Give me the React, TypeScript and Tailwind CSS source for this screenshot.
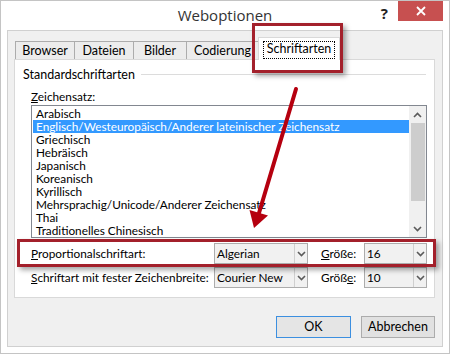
const zeichensaetze = [
  "Arabisch",
  "Englisch/Westeuropäisch/Anderer lateinischer Zeichensatz",
  "Griechisch",
  "Hebräisch",
  "Japanisch",
  "Koreanisch",
  "Kyrillisch",
  "Mehrsprachig/Unicode/Anderer Zeichensatz",
  "Thai",
  "Traditionelles Chinesisch",
];

const tabs = [
  { label: "Browser", w: "w-[60px]" },
  { label: "Dateien", w: "w-[60px]" },
  { label: "Bilder", w: "w-[54px]" },
  { label: "Codierung", w: "w-[73px]" },
];

const Chevron = ({ up }: { up?: boolean }) => (
  <svg width="9" height="6" viewBox="0 0 9 6">
    <path
      d={up ? "M1 5 L4.5 1.5 L8 5" : "M1 1 L4.5 4.5 L8 1"}
      fill="none"
      stroke="#5a5a5a"
      strokeWidth="1.6"
    />
  </svg>
);

const Combo = ({ value, w }: { value: string; w: string }) => (
  <div className={`flex h-[21px] ${w} border border-[#acacac] bg-[#f1f1f1]`}>
    <span className="flex-1 whitespace-nowrap pl-[2px] leading-[19px]">{value}</span>
    <span className="flex w-[13px] items-center justify-center border-l border-[#cfcfcf]">
      <Chevron />
    </span>
  </div>
);

export default function App() {
  return (
    <div className="relative h-[354px] w-[450px] overflow-hidden border border-[#c4c4c4] bg-white font-['Lato',sans-serif] text-[11.8px] text-black">
      {/* title bar */}
      <div className="grid h-[29px] grid-cols-[1fr_auto_1fr]">
        <div />
        <div className="pt-[3px] font-['Open_Sans',sans-serif] text-[15px] leading-[22px] text-[#333]">Weboptionen</div>
        <div className="flex items-start justify-end">
          <span className="mr-[10px] mt-[3px] font-['Open_Sans',sans-serif] text-[15px] font-bold leading-[18px] text-[#222]">?</span>
          <div className="mr-[6px] flex h-[20px] w-[45px] items-center justify-center bg-[#c75050]">
            <svg width="10" height="10" viewBox="0 0 10 10">
              <path d="M1 1 L9 9 M9 1 L1 9" stroke="#fff" strokeWidth="1.8" />
            </svg>
          </div>
        </div>
      </div>

      {/* client area */}
      <div className="mx-[6px] h-[317px] border border-[#d0d0d0] bg-[#f0f0f0] pt-[6px]">
        <div className="flex h-[22px] items-end pl-[7px] text-[12.5px]">
          {tabs.map((t, i) => (
            <div
              key={t.label}
              className={`${t.w} ${i > 0 ? "-ml-px" : ""} h-[18px] border border-b-0 border-[#acacac] bg-[#ececec] text-center leading-[17px]`}
            >
              {t.label}
            </div>
          ))}
          <div className="relative z-10 -mb-px -ml-px flex h-[23px] w-[82px] justify-center border border-b-0 border-[#d9d9d9] bg-white pt-[4px]">
            <span className="h-[16px] px-[3px] leading-[14px] outline-1 outline-dotted outline-black">
              Schriftarten
            </span>
          </div>
        </div>

        <div className="ml-[6px] h-[239px] w-[421px] border border-[#d9d9d9] bg-white">
          <div className="box-content flex h-[15px] items-center pl-[8px] pt-[7px] text-[12.5px]">
            <span className="leading-[15px]">Standardschriftarten</span>
            <span className="ml-[6px] mr-[8px] h-px flex-1 bg-[#dcdcdc]" />
          </div>
          <div className="mt-[7px] pl-[16px] leading-[15px]">
            <u>Z</u>eichensatz:
          </div>

          <div className="ml-[16px] mt-[1px] flex h-[133px] w-[396px] border border-[#828790] bg-white">
            <div className="flex-1 pl-[1px] pt-[1px]">
              {zeichensaetze.map((z, i) => (
                <div
                  key={z}
                  className={`h-[13px] whitespace-nowrap pl-[3px] leading-[13px] ${i === 1 ? "bg-[#3399ff] text-white" : ""}`}
                >
                  {z}
                </div>
              ))}
            </div>
            <div className="flex w-[17px] flex-col items-center bg-[#f0f0f0]">
              <div className="flex h-[17px] items-center">
                <Chevron up />
              </div>
              <div className="h-[78px] w-[14px] bg-[#cdcdcd]" />
              <div className="flex-1" />
              <div className="flex h-[17px] items-center">
                <Chevron />
              </div>
            </div>
          </div>

          <div className="ml-[16px] mt-[5px] flex flex-col gap-[3px]">
            <div className="flex items-center">
              <span className="w-[183px] whitespace-nowrap">
                <u>P</u>roportionalschriftart:
              </span>
              <Combo value="Algerian" w="w-[94px]" />
              <span className="ml-[13px] w-[43px]">
                <u>G</u>röße:
              </span>
              <Combo value="16" w="w-[63px]" />
            </div>
            <div className="flex items-center">
              <span className="w-[183px] whitespace-nowrap">
                <u>S</u>chriftart mit fester Zeichenbreite:
              </span>
              <Combo value="Courier New" w="w-[94px]" />
              <span className="ml-[13px] w-[43px]">
                Größ<u>e</u>:
              </span>
              <Combo value="10" w="w-[63px]" />
            </div>
          </div>
        </div>

        <div className="mr-[7px] mt-[18px] flex justify-end gap-[10px] text-[12.5px]">
          <button className="h-[22px] w-[75px] border border-[#3c8fe0] bg-[#e5e5e5] leading-[20px]">OK</button>
          <button className="h-[22px] w-[74px] border border-[#acacac] bg-[#e1e1e1] leading-[20px]">Abbrechen</button>
        </div>
      </div>

      {/* annotations */}
      <div className="absolute left-[251px] top-[22px] h-[50px] w-[91px] border-[3px] border-[#a3202b] shadow-[3px_3px_5px_rgba(0,0,0,0.35)]" />
      <div className="absolute left-[16px] top-[238px] h-[28px] w-[419px] border-[3px] border-[#a3202b] shadow-[3px_3px_5px_rgba(0,0,0,0.35)]" />
      <svg className="absolute left-0 top-0" width="450" height="354">
        <line x1="295" y1="88" x2="258" y2="212" stroke="#b5000f" strokeWidth="4" strokeLinecap="round" />
        <polygon points="253,227 248.5,209 267,214.5" fill="#b5000f" />
      </svg>
    </div>
  );
}
